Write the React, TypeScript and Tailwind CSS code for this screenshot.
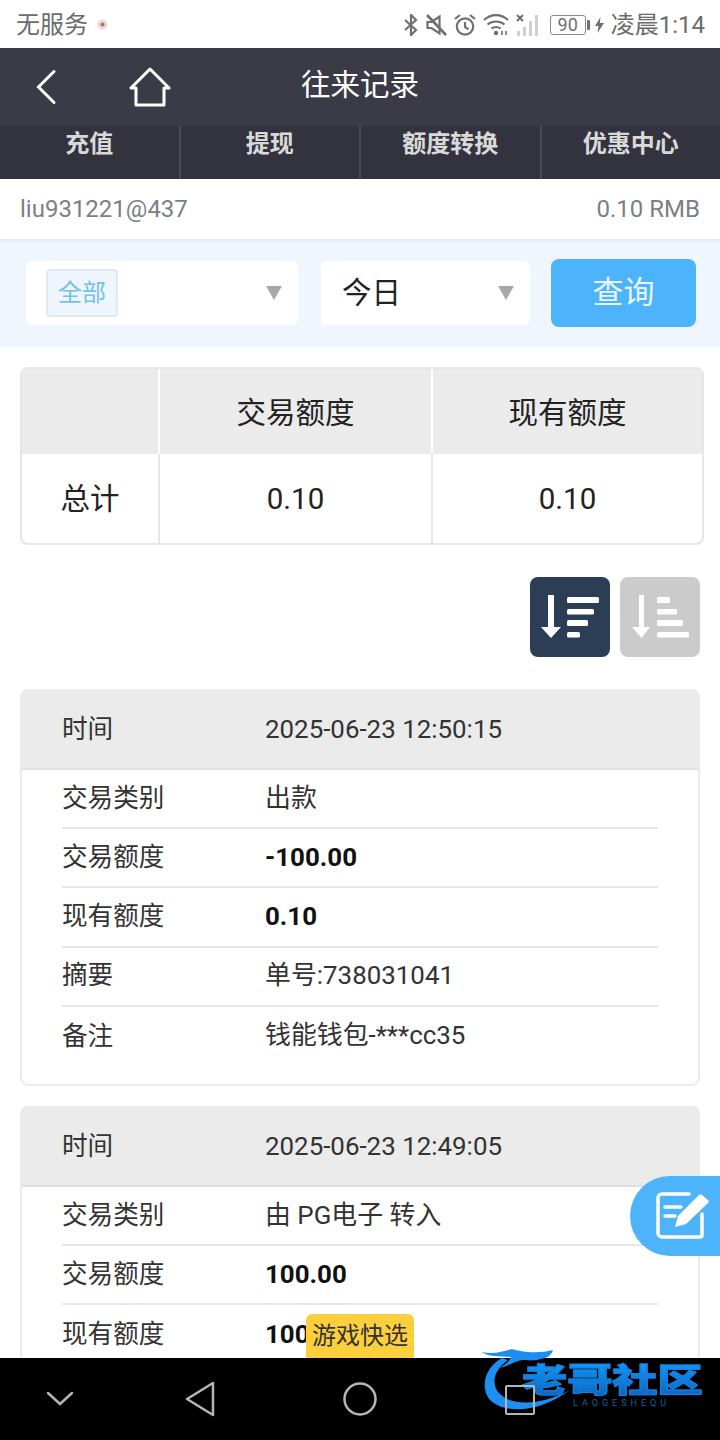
import type { ReactNode } from 'react';

const FONT = 'font-["Roboto","Noto_Sans_CJK_SC",sans-serif]';

interface RecordRow {
  label: string;
  value: string;
  bold?: boolean;
}

const firstRows: RecordRow[] = [
  { label: '交易类别', value: '出款' },
  { label: '交易额度', value: '-100.00', bold: true },
  { label: '现有额度', value: '0.10', bold: true },
  { label: '摘要', value: '单号:738031041' },
  { label: '备注', value: '钱能钱包-***cc35' },
];

const secondRows: RecordRow[] = [
  { label: '交易类别', value: '由 PG电子 转入' },
  { label: '交易额度', value: '100.00', bold: true },
  { label: '现有额度', value: '100.10', bold: true },
];

function StatusIcons() {
  return (
    <div className="flex items-center text-[#6f6f6f]">
      <svg width="14" height="22" viewBox="0 0 14 22" fill="none" stroke="currentColor" strokeWidth="2.200">
        <path d="M1 6l11 10-5 5V1l5 5L1 16" />
      </svg>
      <svg width="21" height="22" viewBox="0 0 21 22" className="ml-[8px]" fill="none" stroke="currentColor" strokeWidth="2.200">
        <path d="M1.500 8h4l8-5.500v17l-8-5.500h-4z" />
        <path d="M1 1l19 20" strokeWidth="2.600" />
      </svg>
      <svg width="22" height="22" viewBox="0 0 22 22" className="ml-[7px]" fill="none" stroke="currentColor" strokeWidth="2.200">
        <circle cx="11" cy="12.500" r="8.200" />
        <path d="M11 8v5l3.500 2.200M1 5l5-4M21 5l-5-4" />
      </svg>
      <svg width="26" height="22" viewBox="0 0 26 22" className="ml-[7px]" fill="none" stroke="currentColor" strokeWidth="2.200">
        <path d="M1 6c7-6.500 17-6.500 24 0M4.500 10.500c5-4 12-4 17 0M8.500 14.500c3-2 6-2 9 0" />
        <circle cx="13" cy="19" r="2.200" fill="currentColor" stroke="none" />
        <path d="M19 21v-4M23 17v4" strokeWidth="1.600" />
      </svg>
      <svg width="23" height="22" viewBox="0 0 23 22" className="ml-[7px]">
        <path d="M1 1l6 6M7 1L1 7" stroke="#6f6f6f" strokeWidth="2" />
        <path d="M1 17h3v5H1zM7 13h3v9H7zM13 7h3v15h-3zM19 1h3v21h-3z" fill="#cfcfcf" />
      </svg>
      <div className="ml-[11px] flex items-center">
        <div className="flex h-[20px] w-[36px] items-center justify-center rounded-[3px] border border-[#8a8a8a] text-[18px] leading-none text-[#6f6f6f]">
          90
        </div>
        <div className="ml-px h-[10px] w-[3px] rounded-[1px] bg-[#6f6f6f]" />
      </div>
      <svg width="9" height="16" viewBox="0 0 9 16" className="ml-[5px]" fill="currentColor">
        <path d="M5.500 0L0 9h3.500l-1 7L9 6H4.800z" />
      </svg>
    </div>
  );
}

function Caret() {
  return <div className="h-0 w-0 border-x-[8px] border-t-[14px] border-x-transparent border-t-[#a8a8a8]" />;
}

function SummaryRow({ cells, header }: { cells: ReactNode[]; header?: boolean }) {
  const cellTone = header ? 'bg-[#ebebeb] pt-[4px] border-white' : 'border-[#e6e6e6] pt-px';

  return (
    <div className={`flex text-[29.500px] text-[#222] ${header ? 'h-[85px]' : 'h-[89px]'}`}>
      <div className={`flex w-[136px] items-center justify-center ${cellTone}`}>{cells[0]}</div>
      <div className={`flex w-[273px] items-center justify-center border-l-2 ${cellTone}`}>{cells[1]}</div>
      <div className={`flex flex-1 items-center justify-center border-l-2 ${cellTone}`}>{cells[2]}</div>
    </div>
  );
}

function RecordCard({ time, rows, footer }: { time: string; rows: RecordRow[]; footer?: boolean }) {
  return (
    <section className={`mb-[20px] rounded-[8px] border-2 border-[#ebebeb] ${footer ? 'pb-[18px]' : 'rounded-b-none border-b-0'}`}>
      <div className="flex h-[79px] items-center border-b-2 border-[#e0e0e0] bg-[#ebebeb] px-[40px] text-[#333]">
        <div className="w-[203px] text-[25.600px]">时间</div>
        <div className="text-[25.900px]">{time}</div>
      </div>
      <div className="px-[40px]">
        {rows.map((row, index) => (
          <div
            key={row.label}
            className={`flex h-[59.200px] items-center pb-px text-[#333] ${
              index < rows.length - 1 ? 'border-b-2 border-[#e6e6e6]' : ''
            }`}
          >
            <div className="w-[203px] text-[25.600px]">{row.label}</div>
            <div className={`text-[25.900px] ${row.bold ? 'font-bold text-[#111]' : ''}`}>{row.value}</div>
          </div>
        ))}
      </div>
    </section>
  );
}

export default function App() {
  return (
    <div className={`${FONT} relative flex h-[1440px] w-[720px] flex-col overflow-hidden bg-white`}>
      <div className="flex h-[48px] shrink-0 items-center justify-between bg-white pl-[16px] pr-[15px] pt-px text-[24px] text-[#6b6b6b]">
        <div className="flex items-center">
          <span>无服务</span>
          <svg width="11" height="11" viewBox="0 0 12 12" className="ml-[9px]">
            <circle cx="6" cy="6" r="5.500" fill="#f0d5d6" />
            <circle cx="6" cy="6" r="2.200" fill="#a9777a" />
          </svg>
        </div>
        <div className="flex items-center">
          <StatusIcons />
          <span className="ml-[7px] whitespace-nowrap">凌晨1:14</span>
        </div>
      </div>

      <header className="flex h-[78px] shrink-0 items-center bg-[#3b3b47]">
        <svg width="24" height="44" viewBox="0 0 24 44" className="ml-[35px]" fill="none" stroke="#fff" strokeWidth="3" strokeLinecap="round">
          <path d="M19 6.500L3.500 22 19 37.500" />
        </svg>
        <svg width="42" height="42" viewBox="0 0 42 42" className="ml-[70px]" fill="none" stroke="#fff" strokeWidth="3">
          <path d="M21 3L2 22h5v17h28V22h5z" strokeLinejoin="round" />
        </svg>
        <h1 className="ml-[130px] pb-[3px] text-[29.500px] font-normal text-white">往来记录</h1>
      </header>

      <nav className="flex h-[53px] shrink-0 bg-[#33333f] text-[24px] font-bold text-[#d9d9d9]">
        {['充值', '提现', '额度转换', '优惠中心'].map((tab) => (
          <div key={tab} className="flex flex-1 items-start justify-center border-r-2 border-[#4a4a55] last:border-r-0">
            {tab}
          </div>
        ))}
      </nav>

      <div className="z-10 flex h-[60px] shrink-0 items-center justify-between bg-white px-[20px] text-[24px] text-[#7b7f84] shadow-[0_1px_4px_rgba(0,0,0,0.1)]">
        <span>liu931221@437</span>
        <span>0.10 RMB</span>
      </div>

      <div className="flex h-[108px] shrink-0 items-center bg-[#f0f6fd] pl-[26px] pr-[24px]">
        <div className="flex h-[64px] w-[272px] items-center justify-between rounded-[6px] bg-white pl-[20px] pr-[16px]">
          <div className="flex h-[48px] w-[72px] items-center justify-center rounded-[4px] border-2 border-[#dfe9f5] bg-[#eef5fd] text-[24px] text-[#74c0ec]">
            全部
          </div>
          <Caret />
        </div>
        <div className="ml-[23px] flex h-[64px] w-[209px] items-center justify-between rounded-[6px] bg-white pl-[21px] pr-[16px] text-[29.500px] text-[#222]">
          <span>今日</span>
          <Caret />
        </div>
        <button type="button" className="ml-[21px] h-[68px] w-[145px] rounded-[8px] bg-[#4db3fb] text-[31px] text-[#eaf6ff]">
          查询
        </button>
      </div>

      <div className="flex-1 overflow-hidden px-[20px] pt-[20px]">
        <div className="mr-[-4px] overflow-hidden rounded-[8px] border-2 border-[#e6e6e6]">
          <SummaryRow header cells={['', '交易额度', '现有额度']} />
          <SummaryRow cells={['总计', '0.10', '0.10']} />
        </div>

        <div className="mb-[32px] mt-[32px] flex justify-end gap-[10px]">
          <button type="button" className="flex h-[80px] w-[80px] items-center justify-center rounded-[8px] bg-[#2c3e55]">
            <svg width="60" height="48" viewBox="0 0 60 48" fill="#fff">
              <path d="M8 2h6v32h7L11 45 1 34h7z" />
              <rect x="27" y="4" width="32" height="6" rx="1.500" />
              <rect x="27" y="16" width="27" height="5.500" rx="1.500" />
              <rect x="27" y="27" width="21" height="6" rx="1.500" />
              <rect x="27" y="39" width="13" height="5.500" rx="1.500" />
            </svg>
          </button>
          <button type="button" className="flex h-[80px] w-[80px] items-center justify-center rounded-[8px] bg-[#cbcbcb]">
            <svg width="60" height="48" viewBox="0 0 60 48" fill="#fff">
              <path d="M9 2h5v32h6L11.500 45 2 34h7z" />
              <rect x="27" y="4" width="13" height="6" rx="1.500" />
              <rect x="27" y="16" width="20" height="5.500" rx="1.500" />
              <rect x="27" y="27" width="26" height="6" rx="1.500" />
              <rect x="27" y="39" width="32" height="5.500" rx="1.500" />
            </svg>
          </button>
        </div>

        <RecordCard time="2025-06-23 12:50:15" rows={firstRows} footer />
        <RecordCard time="2025-06-23 12:49:05" rows={secondRows} />
      </div>

      <nav className="relative flex h-[82px] shrink-0 items-center bg-black">
        <svg width="28" height="18" viewBox="0 0 28 18" className="ml-[46px]" fill="none" stroke="#b5b5b5" strokeWidth="2.500" strokeLinecap="round">
          <path d="M2 3l12 11L26 3" />
        </svg>
        <svg width="32" height="36" viewBox="0 0 32 36" className="ml-[111px]" fill="none" stroke="#b5b5b5" strokeWidth="2.500" strokeLinejoin="round">
          <path d="M28 2v32L2 18z" />
        </svg>
        <svg width="34" height="34" viewBox="0 0 34 34" className="ml-[126px]" fill="none" stroke="#b5b5b5" strokeWidth="2.500">
          <circle cx="17" cy="17" r="15.500" />
        </svg>
        <div className="relative z-10 ml-[128px] mt-[1px] h-[30px] w-[30px] rounded-[2px] border-2 border-[#b5b5b5]" />
      </nav>

      <button type="button" className="absolute left-[630px] top-[1176px] flex h-[80px] w-[90px] items-center rounded-l-[40px] bg-[#4db3fb] pl-[26px]">
        <svg width="54" height="48" viewBox="0 0 54 48" fill="none" stroke="#fff" strokeWidth="3.500" strokeLinecap="round">
          <path d="M33 2H6a4 4 0 0 0-4 4v35a4 4 0 0 0 4 4h39a2 2 0 0 0 1-2V22" />
          <path d="M9 15h16M9 24h10" />
          <path d="M19 35l3-11L43 3a2 2 0 0 1 3 0l6 5a2 2 0 0 1 0 3L30 32z" fill="#fff" stroke="none" />
        </svg>
      </button>

      <div className="absolute left-[306px] top-[1314px] flex h-[44px] w-[108px] items-center justify-center rounded-t-[6px] bg-[#fdcf3c] text-[24px] text-[#333]">
        游戏快选
      </div>

      <div className="absolute left-[482px] top-[1344px] h-[72px] w-[226px]">
        <svg width="226" height="72" viewBox="0 0 226 72" className="absolute left-0 top-0" fill="none">
          <path d="M20 14C2 24-2 44 8 56c12 12 44 16 80-10-30 16-58 16-70 4C8 40 12 26 26 16z" fill="#1b8ff2" />
          <path d="M0 8c12 3 22-1 30-3 9 3 26 5 41 1-2 7-9 9-14 9 3 1-8 2-14 1-8-1-16 6-25 8 4-3 10-7 11-11C18 12 6 13 0 8z" fill="#1b8ff2" />
        </svg>
        <div className="absolute left-[40px] top-[20px] origin-left scale-x-[1.390] whitespace-nowrap bg-gradient-to-b from-[#1496f5] to-[#0d62bd] bg-clip-text text-[32.500px] font-black leading-[34px] text-transparent [-webkit-text-stroke:1px_#1180e0]">
          老哥社区
        </div>
        <div className="absolute left-[91px] top-[55px] whitespace-nowrap text-[9px] leading-none tracking-[4px] text-[#1c5f9e]">
          LAOGESHEQU
        </div>
      </div>
    </div>
  );
}
